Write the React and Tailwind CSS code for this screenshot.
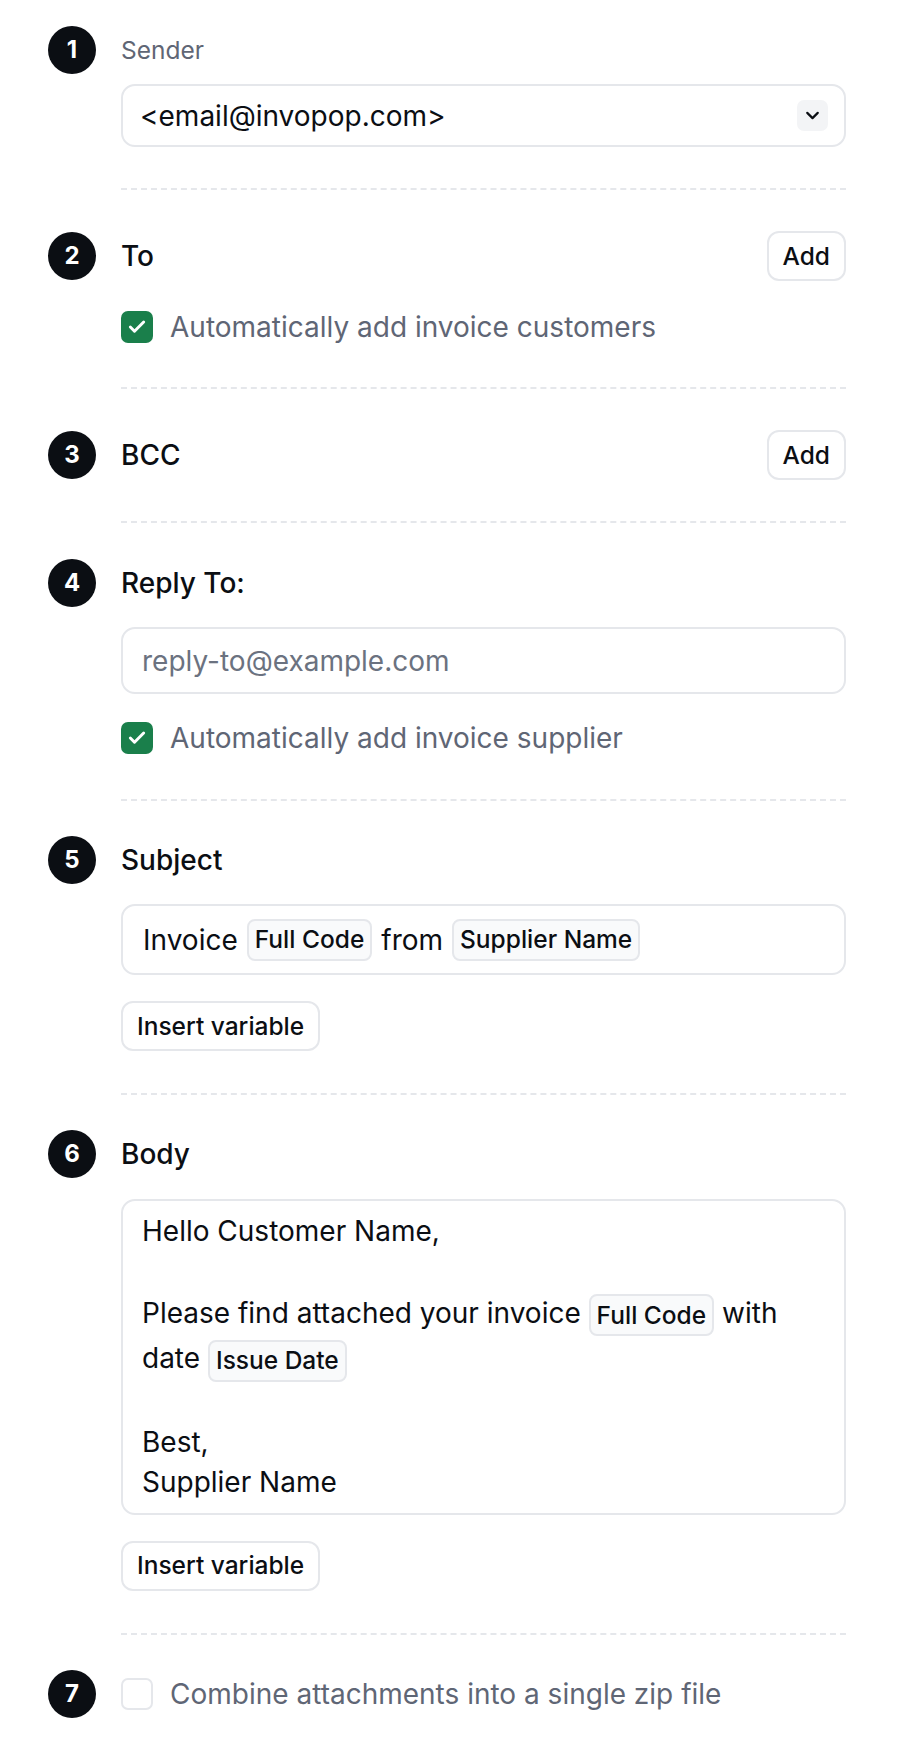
import { ChevronDown, Check } from "lucide-react";

function StepBadge({ n }) {
  return (
    <div className="w-12 h-12 shrink-0 rounded-full bg-[#0b0e13] text-white font-bold text-[24px] flex items-center justify-center">
      {n}
    </div>
  );
}

function Divider({ className }) {
  return <div className={"ml-[73px] border-t-2 border-dashed border-[#e5e7eb] " + className} />;
}

function OutlineButton({ children }) {
  return (
    <button className="h-[50px] px-[14px] rounded-[12px] border-2 border-[#e5e7eb] bg-white text-[24.5px] font-medium text-[#0b0e13]">
      {children}
    </button>
  );
}

function CheckRow({ checked, label }) {
  return (
    <label className="flex items-center gap-[17px] h-[42px]">
      {checked ? (
        <span className="w-[32px] h-[32px] rounded-[7px] bg-[#1a7f4b] flex items-center justify-center">
          <Check size={20} strokeWidth={3.5} className="text-white" />
        </span>
      ) : (
        <span className="w-[32px] h-[32px] rounded-[7px] border-2 border-[#e5e7eb] bg-white" />
      )}
      <span className="text-[28px] leading-[42px] text-[#5f6675]">{label}</span>
    </label>
  );
}

function Chip({ children }) {
  return (
    <span className="inline-flex items-center h-[42px] px-[6px] rounded-[8px] border-2 border-[#e5e7eb] bg-[#f9fafb] text-[24.5px] font-medium text-[#0b0e13] align-middle">
      {children}
    </span>
  );
}

export default function App() {
  return (
    <div
      className="min-h-screen bg-white pt-[26px] pl-[48px] pr-[78px] pb-[38px] text-[#0b0e13]"
      style={{ fontFamily: "Inter, 'Noto Sans', sans-serif" }}
    >
      {/* 1 Sender */}
      <div className="flex items-center gap-[25px] h-12">
        <StepBadge n={1} />
        <span className="text-[24.5px] text-[#5f6675]">Sender</span>
      </div>
      <div className="ml-[73px] mt-[10px] h-[63px] rounded-[14px] border-2 border-[#e5e7eb] flex items-center justify-between pl-[17px] pr-[16px]">
        <span className="text-[28px]">&lt;email@invopop.com&gt;</span>
        <span className="w-[31px] h-[31px] rounded-[7px] bg-[#f3f4f6] flex items-center justify-center">
          <ChevronDown size={21} strokeWidth={2.5} />
        </span>
      </div>
      <Divider className="mt-[41px]" />

      {/* 2 To */}
      <div className="mt-[41px] flex items-center gap-[25px]">
        <StepBadge n={2} />
        <div className="flex-1 flex items-center justify-between">
          <span className="text-[28px] font-medium">To</span>
          <OutlineButton>Add</OutlineButton>
        </div>
      </div>
      <div className="ml-[73px] mt-[25px]">
        <CheckRow checked label="Automatically add invoice customers" />
      </div>
      <Divider className="mt-[39px]" />

      {/* 3 BCC */}
      <div className="mt-[41px] flex items-center gap-[25px]">
        <StepBadge n={3} />
        <div className="flex-1 flex items-center justify-between">
          <span className="text-[28px] font-medium">BCC</span>
          <OutlineButton>Add</OutlineButton>
        </div>
      </div>
      <Divider className="mt-[41px]" />

      {/* 4 Reply To */}
      <div className="mt-[36px] flex items-center gap-[25px] h-12">
        <StepBadge n={4} />
        <span className="text-[28px] font-medium">Reply To:</span>
      </div>
      <div className="ml-[73px] mt-[20px]">
        <input
          type="text"
          placeholder="reply-to@example.com"
          className="w-full h-[67px] rounded-[14px] border-2 border-[#e5e7eb] px-[19px] text-[28px] placeholder:text-[#6b7280] outline-none"
        />
      </div>
      <div className="ml-[73px] mt-[23px]">
        <CheckRow checked label="Automatically add invoice supplier" />
      </div>
      <Divider className="mt-[40px]" />

      {/* 5 Subject */}
      <div className="mt-[35px] flex items-center gap-[25px] h-12">
        <StepBadge n={5} />
        <span className="text-[28px] font-medium">Subject</span>
      </div>
      <div className="ml-[73px] mt-[20px] h-[71px] rounded-[14px] border-2 border-[#e5e7eb] px-[20px] flex items-center gap-[9px] text-[28px]">
        <span>Invoice</span>
        <Chip>Full Code</Chip>
        <span>from</span>
        <Chip>Supplier Name</Chip>
      </div>
      <div className="ml-[73px] mt-[26px]">
        <OutlineButton>Insert variable</OutlineButton>
      </div>
      <Divider className="mt-[42px]" />

      {/* 6 Body */}
      <div className="mt-[35px] flex items-center gap-[25px] h-12">
        <StepBadge n={6} />
        <span className="text-[28px] font-medium">Body</span>
      </div>
      <div className="ml-[73px] mt-[21px] rounded-[14px] border-2 border-[#e5e7eb] pl-[19px] pr-[19px] pt-[10px] pb-[11px] text-[28px] leading-[40px]">
        <p>Hello Customer Name,</p>
        <p>&nbsp;</p>
        <p className="leading-[45px]">
          Please find attached your invoice <Chip>Full Code</Chip> with date{" "}
          <Chip>Issue Date</Chip>
        </p>
        <p>&nbsp;</p>
        <p>Best,</p>
        <p>Supplier Name</p>
      </div>
      <div className="ml-[73px] mt-[26px]">
        <OutlineButton>Insert variable</OutlineButton>
      </div>
      <Divider className="mt-[42px]" />

      {/* 7 Zip */}
      <div className="mt-[35px] flex items-center gap-[25px] h-12">
        <StepBadge n={7} />
        <CheckRow checked={false} label="Combine attachments into a single zip file" />
      </div>
    </div>
  );
}
